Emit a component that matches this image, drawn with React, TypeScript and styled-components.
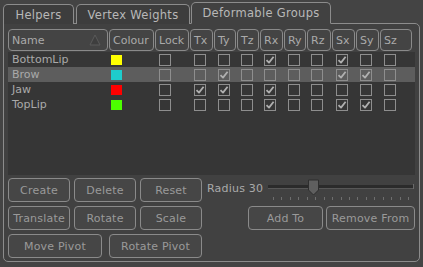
import React from 'react';
import styled, { createGlobalStyle } from 'styled-components';

const GlobalStyle = createGlobalStyle`
  html, body {
    margin: 0;
    padding: 0;
    background: #444444;
  }
  body {
    font-family: "DejaVu Sans", "Liberation Sans", sans-serif;
    font-size: 11px;
    color: #b4b4b4;
  }
`;

const Window = styled.div`
  width: 423px;
  height: 267px;
  box-sizing: border-box;
  padding: 2px 3px 0 3px;
  background: #444444;
`;

const TabBar = styled.div`
  display: flex;
  align-items: flex-end;
  height: 22px;
  position: relative;
  z-index: 1;
`;

const Tab = styled.div<{ $active?: boolean; $width: number }>`
  box-sizing: border-box;
  width: ${p => p.$width}px;
  height: ${p => (p.$active ? 22 : 20)}px;
  margin-right: ${p => (p.$active ? 0 : 2)}px;
  margin-left: ${p => (p.$active ? -1 : 0)}px;
  border: 1px solid #8c8c8c;
  border-bottom: ${p => (p.$active ? '1px solid #414141' : 'none')};
  border-radius: 5px 5px 0 0;
  background: ${p => (p.$active ? '#414141' : '#3d3d3d')};
  color: #b8b8b8;
  font-size: 11.5px;
  letter-spacing: 0.3px;
  display: flex;
  align-items: center;
  justify-content: center;
  padding-top: ${p => (p.$active ? 0 : 1)}px;
`;

const Panel = styled.div`
  box-sizing: border-box;
  width: 417px;
  height: 239px;
  margin-top: -1px;
  border: 1px solid #8c8c8c;
  border-radius: 0 5px 5px 5px;
  background: #414141;
  padding: 4px 4px 0 4px;
`;

const Table = styled.div`
  width: 407px;
  height: 147px;
  background: #363636;
  display: flex;
  flex-direction: column;
`;

const COLS = '101px 46px 35px 24px 23px 23px 24px 23px 25px 24px 24px 33px';

const HeaderRow = styled.div`
  display: grid;
  grid-template-columns: ${COLS};
  height: 24px;
  background: #414141;
  padding-top: 1px;
  box-sizing: border-box;
`;

const HeaderCell = styled.div`
  box-sizing: border-box;
  height: 22px;
  margin-right: 1px;
  border: 1px solid #8a8a8a;
  border-radius: 4px;
  background: #444444;
  color: #aaaaaa;
  display: flex;
  align-items: center;
  padding-left: 3px;
  position: relative;
`;

const SortArrow = styled.svg`
  position: absolute;
  right: 6px;
  top: 4px;
`;

const Row = styled.div<{ $selected?: boolean }>`
  display: grid;
  grid-template-columns: ${COLS};
  height: 15px;
  align-items: center;
  background: ${p => (p.$selected ? '#5d5d5d' : 'transparent')};
`;

const NameCell = styled.div`
  padding-left: 4px;
  color: #aaaaaa;
  line-height: 15px;
`;

const Swatch = styled.div<{ $color: string }>`
  width: 11px;
  height: 10px;
  margin-left: 2px;
  background: ${p => p.$color};
`;

const Box = styled.div`
  box-sizing: border-box;
  width: 12px;
  height: 12px;
  margin-left: 4px;
  border: 1px solid #8e8e8e;
  display: flex;
  align-items: center;
  justify-content: center;
`;

const Controls = styled.div`
  display: flex;
  gap: 4px;
  margin-top: 3px;
`;

const LeftGrid = styled.div`
  display: grid;
  grid-template-columns: repeat(3, 62px);
  grid-auto-rows: 24px;
  column-gap: 4px;
  row-gap: 4px;
  width: 194px;
`;

const PivotRow = styled.div`
  grid-column: 1 / span 3;
  display: grid;
  grid-template-columns: 94px 93px;
  column-gap: 7px;
`;

const Button = styled.div<{ $width?: number }>`
  box-sizing: border-box;
  height: 24px;
  ${p => (p.$width ? `width: ${p.$width}px;` : '')}
  border: 1px solid #8a8a8a;
  border-radius: 4px;
  background: #464646;
  color: #9a9a9a;
  letter-spacing: 0.2px;
  display: flex;
  align-items: center;
  justify-content: center;
  white-space: nowrap;
`;

const RightCol = styled.div`
  display: flex;
  flex-direction: column;
  width: 209px;
  gap: 4px;
`;

const SliderRow = styled.div`
  display: flex;
  align-items: flex-start;
  height: 24px;
`;

const Label = styled.span`
  color: #aaaaaa;
  margin-left: 1px;
  margin-top: 4px;
  width: 61px;
  white-space: nowrap;
  letter-spacing: 0.2px;
`;

const SliderBox = styled.div`
  width: 146px;
  height: 24px;
`;

const ActionRow = styled.div`
  display: flex;
  justify-content: flex-end;
  gap: 3px;
`;

const Check = () => (
  <svg width="10" height="10" viewBox="0 0 10 10">
    <path d="M1.5 5.2 L4 7.6 L8.6 1.8" fill="none" stroke="#b0b0b0" strokeWidth="1.8" strokeLinejoin="round" />
  </svg>
);

type Group = { name: string; color: string; flags: boolean[] };

const groups: Group[] = [
  { name: 'BottomLip', color: '#ffff00', flags: [false, false, false, false, true, false, false, true, false, false] },
  { name: 'Brow', color: '#1ecccc', flags: [false, false, true, false, false, false, false, true, true, false] },
  { name: 'Jaw', color: '#ff0000', flags: [false, true, true, false, true, false, false, false, false, false] },
  { name: 'TopLip', color: '#4cff00', flags: [false, false, false, false, true, false, false, true, true, false] },
];

const headers = ['Colour', 'Lock', 'Tx', 'Ty', 'Tz', 'Rx', 'Ry', 'Rz', 'Sx', 'Sy', 'Sz'];

const Slider = ({ value }: { value: number }) => {
  const x0 = 5;
  const x1 = 140;
  const hx = x0 + ((x1 - x0) * value) / 100;
  const ticks = Array.from({ length: 17 }, (_, i) => x0 + ((x1 - x0) * i) / 16);
  return (
    <svg width="146" height="24" viewBox="0 0 146 24">
      <rect x="0" y="7" width="146" height="3" fill="#2b2b2b" />
      <rect x="0" y="10" width="146" height="1" fill="#575757" />
      <rect x="145" y="6" width="1" height="5" fill="#6a6a6a" />
      {ticks.map((t, i) => (
        <rect key={i} x={Math.round(t)} y="19" width="1" height="3" fill="#6e6e6e" />
      ))}
      <path
        d={`M${hx - 5} 2 H${hx + 5} V12 L${hx} 17 L${hx - 5} 12 Z`}
        fill="#5f5f5f"
        stroke="#2e2e2e"
        strokeWidth="1"
      />
    </svg>
  );
};

export default function App() {
  return (
    <>
      <GlobalStyle />
      <Window>
        <TabBar>
          <Tab $width={71}>Helpers</Tab>
          <Tab $width={114}>Vertex Weights</Tab>
          <Tab $active $width={140}>Deformable Groups</Tab>
        </TabBar>
        <Panel>
          <Table>
            <HeaderRow>
              <HeaderCell>
                Name
                <SortArrow width="12" height="12" viewBox="0 0 12 12">
                  <path d="M6 1 L11 11 H1 Z" fill="#3e3e3e" stroke="#5a5a5a" strokeWidth="1" />
                </SortArrow>
              </HeaderCell>
              {headers.map(h => (
                <HeaderCell key={h}>{h}</HeaderCell>
              ))}
            </HeaderRow>
            {groups.map(g => (
              <Row key={g.name} $selected={g.name === 'Brow'}>
                <NameCell>{g.name}</NameCell>
                <Swatch $color={g.color} />
                {g.flags.map((f, i) => (
                  <Box key={i}>{f && <Check />}</Box>
                ))}
              </Row>
            ))}
          </Table>
          <Controls>
            <LeftGrid>
              <Button>Create</Button>
              <Button>Delete</Button>
              <Button>Reset</Button>
              <Button>Translate</Button>
              <Button>Rotate</Button>
              <Button>Scale</Button>
              <PivotRow>
                <Button>Move Pivot</Button>
                <Button>Rotate Pivot</Button>
              </PivotRow>
            </LeftGrid>
            <RightCol>
              <SliderRow>
                <Label>Radius 30</Label>
                <SliderBox>
                  <Slider value={30} />
                </SliderBox>
              </SliderRow>
              <ActionRow>
                <Button $width={75}>Add To</Button>
                <Button $width={89}>Remove From</Button>
              </ActionRow>
            </RightCol>
          </Controls>
        </Panel>
      </Window>
    </>
  );
}
